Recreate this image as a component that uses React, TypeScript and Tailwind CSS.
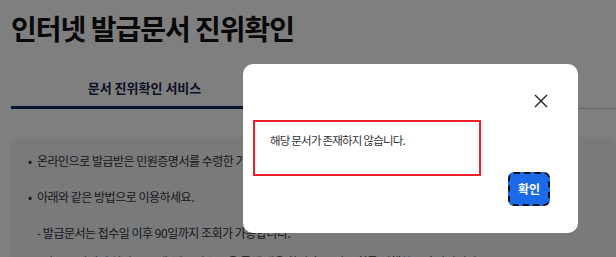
import React from "react";

export default function App() {
  const font = { fontFamily: '"Noto Sans CJK KR", "Noto Sans", sans-serif' };
  return (
    <div className="relative w-full h-[257px] overflow-hidden bg-white" style={font}>
      <div className="pl-[11px] pt-[8px]">
        <h1 className="text-[28px] leading-[40px] font-bold text-[#111] tracking-[-1px]">인터넷 발급문서 진위확인</h1>
        <div className="mt-[26px] flex border-b border-[#c8c8c8]">
          <div className="w-[267px] h-[35px] pt-[4px] flex items-start justify-center border-b-[3px] border-[#0b2a5c] -mb-px">
            <span className="text-[13px] leading-[20px] font-bold text-[#14244a]">문서 진위확인 서비스</span>
          </div>
        </div>
        <div className="mt-[28px] rounded-[8px] bg-[#f3f4f6] pl-[17px] pt-[14px] h-[200px] text-[12px] leading-[20px] text-[#333] tracking-[-0.5px]">
          <p className="flex"><span className="w-[9px]">•</span>온라인으로 발급받은 민원증명서를 수령한 기관에서 진위를 확인할 수 있습니다.</p>
          <p className="flex mt-[16px]"><span className="w-[9px]">•</span>아래와 같은 방법으로 이용하세요.</p>
          <p className="mt-[16px] pl-[9px]">- 발급문서는 접수일 이후 90일까지 조회가 가능합니다.</p>
          <p className="mt-[9px] pl-[9px]">- 바코드 장비의 설정 시 스캔, 발급번호 등을 통해 내용 확인 후 문서 조회를 진행하시기 바랍니다.</p>
        </div>
      </div>

      <div className="absolute inset-0 bg-black/50" />

      <div className="absolute left-[243px] top-[64px] w-[335px] h-[169px] rounded-[10px] bg-white flex flex-col pt-[30px] px-[10px]">
        <div className="flex justify-end pr-[20px]">
          <button className="w-[14px] h-[14px] flex items-center justify-center text-[#222]">
            <svg width="14" height="14" viewBox="0 0 14 14" fill="none" stroke="currentColor" strokeWidth="1.4">
              <path d="M1 1 L13 13 M13 1 L1 13" />
            </svg>
          </button>
        </div>
        <div className="mt-[12px] flex items-start">
          <div className="w-[228px] h-[56px] border-2 border-[#ec2029] pl-[15px] pt-[8px]">
            <p className="text-[11.5px] leading-[20px] text-[#333] tracking-[-0.8px]">해당 문서가 존재하지 않습니다.</p>
          </div>
          <button className="ml-auto mr-[18px] mt-[52px] w-[42px] h-[34px] rounded-[6px] bg-[#1d6ae8] border-2 border-dashed border-[#111] text-white text-[12px] font-semibold flex items-center justify-center">
            확인
          </button>
        </div>
      </div>
    </div>
  );
}
